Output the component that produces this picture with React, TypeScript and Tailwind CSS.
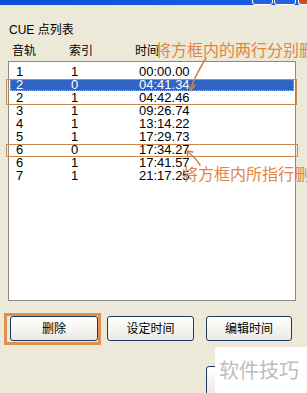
import { FC, ReactElement } from 'react';

const rows = [
  { track: '1', index: '1', time: '00:00.00' },
  { track: '2', index: '0', time: '04:41.34', selected: true },
  { track: '2', index: '1', time: '04:42.46' },
  { track: '3', index: '1', time: '09:26.74' },
  { track: '4', index: '1', time: '13:14.22' },
  { track: '5', index: '1', time: '17:29.73' },
  { track: '6', index: '0', time: '17:34.27' },
  { track: '6', index: '1', time: '17:41.57' },
  { track: '7', index: '1', time: '21:17.25' },
];

const font = { fontFamily: '"Liberation Sans", "Noto Sans CJK SC", sans-serif' };
const cjk = { fontFamily: '"Noto Sans CJK SC", sans-serif' };

const XpButton: FC<{ label: string; className?: string }> = ({ label, className }): ReactElement => (
  <div
    className={`h-[25px] flex items-center justify-center rounded-[3px] border border-[#1c3a5e] bg-gradient-to-b from-white to-[#ebeae4] text-[12px] text-black ${className ?? ''}`}
  >
    {label}
  </div>
);

export default function App(): ReactElement {
  return (
    <div className="relative w-[307px] h-[393px] overflow-hidden bg-[#ece9d8]" style={font}>
      {/* title bar, only the bottom edge shows */}
      <div className="h-[5px] overflow-hidden flex items-end bg-gradient-to-r from-[#0a4fd6] to-[#1761e6]">
        <div className="flex-1" />
        <div className="w-[21px] h-[20px] rounded-[3px] border border-white bg-[#2463e0] mr-[1px]" />
        <div className="w-[22px] h-[20px] rounded-[3px] border border-white bg-[#2463e0] mr-[2px]" />
        <div className="w-[9px] h-[20px] rounded-l-[3px] border border-r-0 border-white bg-[#d8461e]" />
      </div>

      <div className="pt-[18px] pl-[9px] text-[12px] leading-[14px] text-black">CUE 点列表</div>

      <div className="mt-[7px] flex text-[12px] leading-[14px] text-black">
        <span className="w-[69px] pl-[12px]">音轨</span>
        <span className="w-[66px]">索引</span>
        <span>时间</span>
      </div>

      {/* list box */}
      <div className="mt-[3px] ml-[8px] w-[288px] h-[240px] border border-[#8a8a8a] bg-white pt-[3px] px-[1px]">
        {rows.map((r, i) => (
          <div key={i} className="h-[13px] flex items-center text-[13px] leading-[13px]">
            <div
              className={`flex w-full h-[12px] items-center ${
                r.selected ? 'bg-[#2f63c4] text-white outline-1 outline-dotted outline-[#9fb6e2] -outline-offset-1' : 'text-black'
              }`}
            >
              <span className="w-[61px] pl-[6px]">{r.track}</span>
              <span className="w-[68px]">{r.index}</span>
              <span>{r.time}</span>
            </div>
          </div>
        ))}
      </div>

      {/* buttons */}
      <div className="mt-[15px] flex pl-[10px] gap-[9px]">
        <XpButton label="删除" className="w-[88px]" />
        <XpButton label="设定时间" className="w-[87px]" />
        <XpButton label="编辑时间" className="w-[86px] ml-[3px]" />
      </div>

      <div className="mt-[25px] ml-[206px] w-[60px] h-[30px] rounded-[3px] border border-[#1c3a5e] bg-gradient-to-b from-white to-[#ebeae4]" />

      {/* annotations */}
      <div className="absolute left-[6px] top-[79px] w-[291px] h-[26px] border-[1.5px] border-[#c98a50]" />
      <div className="absolute left-[6px] top-[144px] w-[292px] h-[13px] border-[1.5px] border-[#c98a50]" />
      <div className="absolute left-[4px] top-[313px] w-[97px] h-[32px] border-[3px] border-[#de9150]" />

      <div className="absolute left-[155px] top-[40px] whitespace-nowrap text-[16px] leading-[18px] text-[#e4853f]" style={cjk}>
        将方框内的两行分别删除
      </div>
      <div className="absolute left-[182px] top-[164px] whitespace-nowrap text-[16px] leading-[18px] text-[#e4853f]" style={cjk}>
        将方框内所指行删除
      </div>

      <svg className="absolute left-0 top-0" width="307" height="393" fill="none" stroke="#c9844a" strokeWidth="1.5" strokeLinecap="round">
        <path d="M206 58 C201 66 198 72 195 78 C193 82 192 85 191 89" />
        <path d="M188 84 L191 90 L195 85" />
        <path d="M200 165 C197 160 193 156 188 152" />
        <path d="M188 157 L187 151 L193 152" />
      </svg>

      {/* watermark */}
      <div className="absolute left-[215px] top-[347px] w-[92px] h-[46px] bg-white flex items-center pl-[4px]">
        <span className="text-[20px] leading-[22px] text-[#bdbdbd] whitespace-nowrap" style={cjk}>
          软件技巧
        </span>
      </div>
    </div>
  );
}
